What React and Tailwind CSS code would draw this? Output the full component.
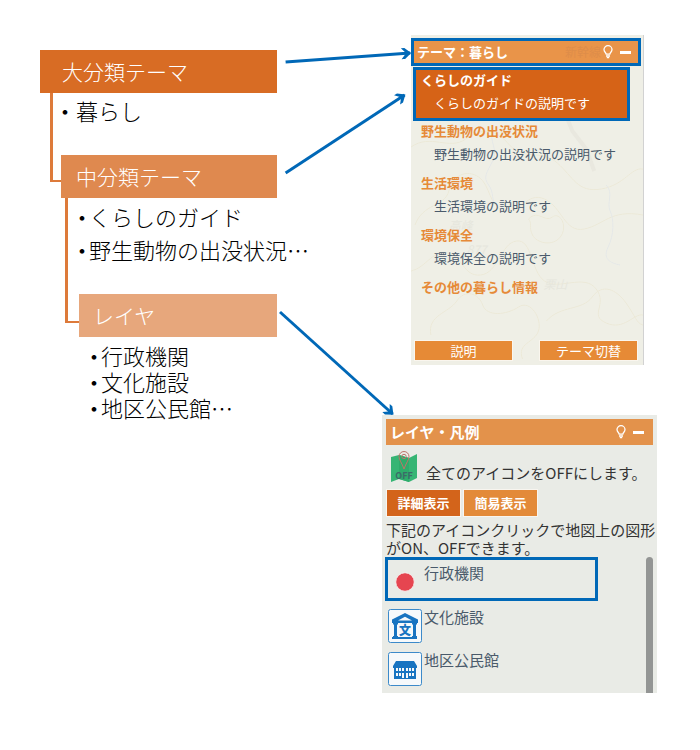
import { useState } from "react";

const themes = [
  { name: "くらしのガイド", description: "くらしのガイドの説明です" },
  { name: "野生動物の出没状況", description: "野生動物の出没状況の説明です" },
  { name: "生活環境", description: "生活環境の説明です" },
  { name: "環境保全", description: "環境保全の説明です" },
  { name: "その他の暮らし情報" },
];

const BulletItem = ({ children, tight = false }) => (
  <li className="flex whitespace-nowrap">
    <span className={tight ? "-mr-1 font-normal" : "font-normal"}>・</span>
    {children}
  </li>
);

const BulbIcon = () => (
  <svg className="w-[10px] h-[14px]" viewBox="0 0 10 14" fill="none" stroke="#fff" aria-hidden="true">
    <path d="M3.2 9.2C3.2 7.8 1 7 1 4.6a4 3.9 0 0 1 8 0C9 7 6.8 7.8 6.8 9.2Z" strokeWidth="1.3" />
    <path d="M3 11h4M3.8 12.6h2.4" strokeWidth="1.3" />
  </svg>
);

const PanelControls = () => (
  <div className="flex items-center gap-[7px]">
    <button type="button" aria-label="ヒント">
      <BulbIcon />
    </button>
    <button type="button" aria-label="最小化" className="w-[11px] h-[14px] flex items-center">
      <span className="w-full h-[3px] bg-white" />
    </button>
  </div>
);

/* Faint map showing through the theme panel */
const MapBackground = () => (
  <svg className="absolute inset-0 w-full h-full" viewBox="0 0 233 330" preserveAspectRatio="none" fill="none" aria-hidden="true">
    <g stroke="#ece9d8">
      <path d="M0 112c20-14 38 4 55-8s30-10 44 6 32 4 48 18 20 30 44 26 30-22 42-20" />
      <path d="M4 190c8-22 30-18 34-34s18-22 30-14 10 30 26 34 22-20 40-12 20 34 40 30 26-20 59-14" />
      <path d="M0 236c16-4 20-20 36-18s16 24 34 22 20-32 36-34 14 30 28 40 40-8 52 8-8 26 10 34 28-10 37-8" />
      <path d="M20 300c-4-20 18-22 26-34s22-8 26 4 24 10 36 2 24 12 20 24-22 12-16 28" />
      <path d="M136 286c14-16 36-10 46-24s24-8 34 6 10 20 17 22M118 184c10-10 16 4 24-2s16 10 8 20-24 6-28-2 0-12-4-16" />
    </g>
    <g stroke="#e5e8e8">
      <path d="M82 96c-4 10 6 18 0 30s-10 16-4 24 2 16 8 20" />
      <path d="M196 150c8 8 0 18 4 26s4 24-2 36 2 16 12 18" />
    </g>
    <path d="M150 66l12 30 14 18 8 22" stroke="#e9e8df" strokeWidth="4" />
    <g fill="#e6e6dd" className="text-[12px] italic">
      <text x="38" y="195">高峰</text>
      <text x="56" y="219">877</text>
      <text x="133" y="254">栗山</text>
    </g>
  </svg>
);

const MapOffIcon = () => (
  <svg className="w-[28px] h-[32px]" viewBox="0 0 28 32" aria-hidden="true">
    <path d="M1 6l8-2v24l-8 3ZM9 4l10 3v24L9 28ZM19 7l8-4v24l-8 4Z" fill="#36b574" />
    <path d="M9 4l10 3v24L9 28Z" fill="#2eac6b" />
    <g fill="none" stroke="#bd7568">
      <path d="M14 18C12 12 9 9 9 5.5a5 5 0 0 1 10 0C19 9 16 12 14 18Z" />
      <circle cx="14" cy="5.5" r="2.2" />
    </g>
    <text x="14" y="28" textAnchor="middle" fill="#3c6b68" className="text-[9px] font-bold">
      OFF
    </text>
  </svg>
);

const DotIcon = () => (
  <svg className="w-[34px] h-[34px]" viewBox="0 0 34 34" aria-hidden="true">
    <circle cx="17" cy="17" r="9.3" fill="#e64550" stroke="#f6f1ef" />
  </svg>
);

const CultureIcon = () => (
  <svg className="w-[34px] h-[34px]" viewBox="0 0 34 34" aria-hidden="true">
    <rect x=".5" y=".5" width="33" height="33" rx="2" fill="#f6f9fb" stroke="#3c8aca" />
    <path d="M17 4L4 10.5V14h26v-3.500Zm0 3.800l7 3.700H10Z" fill="#1874c1" fillRule="evenodd" />
    <path d="M5 14h5v1.500H9V27h1v1h14v-1h1V15.500h-1V14h5v1.500h-1V27h1v3H4v-2h1v-1h1V15.500H5Z" fill="#1874c1" />
    <rect x="10" y="15.500" width="14" height="12" fill="#f6f9fb" />
    <text x="17" y="26" textAnchor="middle" fill="#1874c1" className="text-[12px] font-black">
      文
    </text>
  </svg>
);

const HallIcon = () => (
  <svg className="w-[34px] h-[34px]" viewBox="0 0 34 34" aria-hidden="true">
    <rect x=".5" y=".5" width="33" height="33" rx="2" fill="#f6f9fb" stroke="#3c8aca" />
    <path d="M8 9h18l3 5v2h-1v11H6V16H5v-2Z" fill="#1874c1" />
    <path
      d="M8 16h2v3H8ZM11 16h2v3h-2ZM14 16h2v3h-2ZM18 16h2v3h-2ZM21 16h2v3h-2ZM24 16h2v3h-2ZM8 21h2v3H8ZM11 21h2v3h-2ZM14 21h2v5h-2ZM18 21h2v5h-2ZM21 21h2v3h-2ZM24 21h2v3h-2Z"
      fill="#f6f9fb"
    />
  </svg>
);

const layers = [
  { name: "行政機関", Icon: DotIcon },
  { name: "文化施設", Icon: CultureIcon },
  { name: "地区公民館", Icon: HallIcon },
];

const ThemeTree = () => (
  <section className="pt-[50px] text-[22px] font-light text-black">
    <h2 className="h-[43px] pl-[22px] bg-[#d86c24] text-[21px] leading-[42px] font-light text-white">大分類テーマ</h2>
    <div className="flex pl-[10px]">
      <div className="w-[11px] h-[89px] shrink-0 border-l-[3px] border-b-2 border-[#dd7a3a]" />
      <div className="flex-1 min-w-0">
        <ul className="h-[62px] pt-[2px] -ml-[7px] leading-[30px]">
          <BulletItem>暮らし</BulletItem>
        </ul>
        <h3 className="h-[43px] pl-[15px] bg-[#df894f] text-[21px] leading-[42px] font-light text-white">中分類テーマ</h3>
        <div className="flex pl-1">
          <div className="w-[14px] h-[125px] shrink-0 border-l-[3px] border-b-2 border-[#dd7a3a]" />
          <div className="flex-1 min-w-0">
            <ul className="h-[96px] pt-[2px] -ml-2 leading-[33px]">
              <BulletItem tight>くらしのガイド</BulletItem>
              <BulletItem tight>野生動物の出没状況…</BulletItem>
            </ul>
            <h4 className="h-[43px] pl-[14px] bg-[#e7a77c] text-[21px] leading-[42px] font-light text-white">レイヤ</h4>
            <ul className="pt-[5px] pl-1 leading-[26px]">
              <BulletItem tight>行政機関</BulletItem>
              <BulletItem tight>文化施設</BulletItem>
              <BulletItem tight>地区公民館…</BulletItem>
            </ul>
          </div>
        </div>
      </div>
    </div>
  </section>
);

const ThemePanel = () => {
  const [selected, setSelected] = useState(0);

  return (
    <section className="relative ml-[29px] mr-[13px] pt-[3px] pb-1 bg-[#efefe6] border-r border-[#d2d2d2] text-[13px]">
      <MapBackground />
      <div className="relative">
        <header className="flex items-center h-[28px] mr-[2px] pl-[3px] pr-[7px] border-[3px] border-[#0068b7] bg-[#e99449] text-white whitespace-nowrap">
          <h2 className="font-bold leading-5">テーマ：暮らし</h2>
          <span className="ml-auto mr-[2px] text-[12px] text-[#de8d49]" aria-hidden="true">
            新幹線
          </span>
          <PanelControls />
        </header>

        <ul className="mt-px h-[273px]">
          {themes.map((theme, i) => (
            <li key={theme.name}>
              <button
                type="button"
                onClick={() => setSelected(i)}
                className={
                  i === selected
                    ? "flex flex-col ml-[2px] w-[217px] h-[54px] pl-[5px] border-[3px] border-[#0068b7] bg-[#d66317] text-left text-white whitespace-nowrap"
                    : "flex flex-col w-full h-[52px] pl-[10px] text-left text-[#4a5a6b] whitespace-nowrap"
                }
              >
                <span className={i === selected ? "leading-5 font-bold" : "leading-5 font-bold text-[#e68a38]"}>{theme.name}</span>
                {theme.description && <span className="pl-[13px] leading-[26px]">{theme.description}</span>}
              </button>
            </li>
          ))}
        </ul>

        <div className="flex justify-between pl-[3px] pr-[5px] text-white">
          <button type="button" className="w-[99px] h-[21px] border border-[#faf6ee] bg-[#e68a36] leading-[18px]">
            説明
          </button>
          <button type="button" className="w-[99px] h-[21px] border border-[#faf6ee] bg-[#e68a36] leading-[18px]">
            テーマ切替
          </button>
        </div>
      </div>
    </section>
  );
};

const LegendPanel = () => {
  const [active, setActive] = useState("行政機関");

  return (
    <section className="mt-[50px] pt-1 px-1 bg-[#e9ebe6] text-[15px] text-[#333]">
      <header className="flex items-center justify-between h-[26px] pl-1 pr-[9px] bg-[#e3924b] text-white">
        <h2 className="font-bold">レイヤ・凡例</h2>
        <PanelControls />
      </header>

      <div className="flex items-center h-[44px] pl-1 gap-2 whitespace-nowrap">
        <button type="button" aria-label="全てOFF">
          <MapOffIcon />
        </button>
        <p className="pt-3">全てのアイコンをOFFにします。</p>
      </div>

      <div className="flex gap-[2px] text-[13px] font-bold text-white">
        <button type="button" className="w-[75px] h-[28px] border border-[#f8f5ef] bg-[#d3641b] leading-6">
          詳細表示
        </button>
        <button type="button" className="w-[75px] h-[28px] border border-[#f8f5ef] bg-[#e38a39] leading-6">
          簡易表示
        </button>
      </div>

      <p className="mt-1 -mr-1 leading-[18px]">下記のアイコンクリックで地図上の図形がON、OFFできます。</p>

      <div className="flex justify-between h-[136px]">
        <ul className="-ml-px text-[#4a5a6b]">
          {layers.map(({ name, Icon }) => (
            <li key={name}>
              <button
                type="button"
                onClick={() => setActive(name)}
                className={
                  name === active
                    ? "flex w-[213px] h-[44px] pt-[5px] border-[3px] border-[#0068b7]"
                    : "flex w-[213px] h-[43px] pt-2 pl-[3px]"
                }
              >
                <Icon />
                <span className="pl-[2px] leading-4">{name}</span>
              </button>
            </li>
          ))}
        </ul>
        <div className="w-[7px] rounded-t-full bg-[#939594]" />
      </div>
    </section>
  );
};

/* Arrows from each level of the tree to the panel it opens */
const Arrows = () => (
  <svg className="absolute inset-0 w-full h-full pointer-events-none" aria-hidden="true">
    <defs>
      <marker id="head" viewBox="0 0 12 12" refX="10" refY="6" markerWidth="12" markerHeight="12" markerUnits="userSpaceOnUse" orient="auto">
        <path d="M1 .5H4.500L11 6L4.500 11.500H1L5 7V5Z" fill="#0068b7" />
      </marker>
    </defs>
    <g stroke="#0068b7" strokeWidth="3">
      <line x1="40.8%" y1="62" x2="58.6%" y2="53" markerEnd="url(#head)" />
      <line x1="40.8%" y1="173" x2="57.8%" y2="95" markerEnd="url(#head)" />
      <line x1="40%" y1="312" x2="56.1%" y2="414" markerEnd="url(#head)" />
    </g>
  </svg>
);

export default function App() {
  return (
    <main className="relative grid grid-cols-[minmax(0,40fr)_minmax(0,237fr)_minmax(0,105fr)_minmax(0,275fr)_minmax(0,43fr)] pb-[57px] bg-white font-['Noto_Sans_CJK_JP',sans-serif]">
      <div className="col-start-2">
        <ThemeTree />
      </div>
      <div className="col-start-4 pt-[35px]">
        <ThemePanel />
        <LegendPanel />
      </div>
      <Arrows />
    </main>
  );
}
